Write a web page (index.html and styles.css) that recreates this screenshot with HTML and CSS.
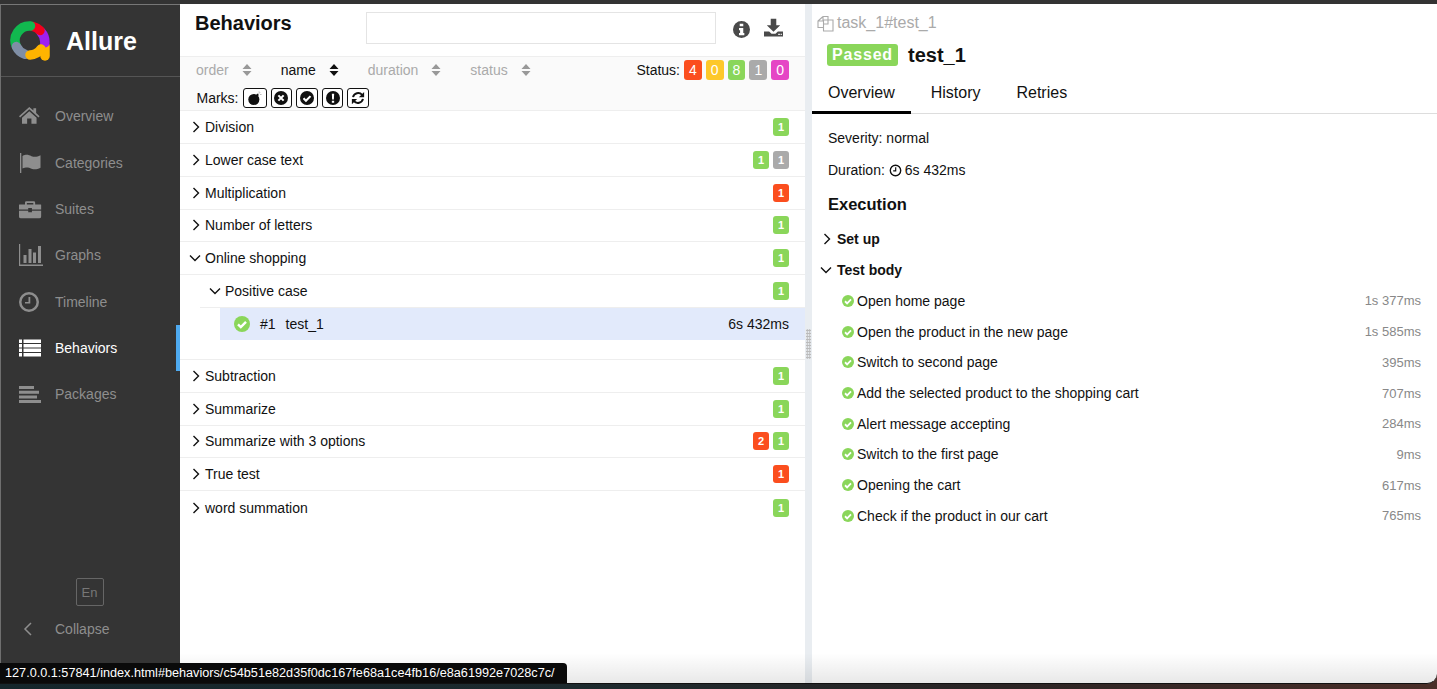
FILE: index.html
```html
<!DOCTYPE html>
<html lang="en">
<head>
    <meta charset="UTF-8">
    <meta name="viewport" content="width=device-width, initial-scale=1.0">
    <title>Allure Report</title>
    <link rel="stylesheet" href="styles.css">
</head>
<body>
<svg class="sprite" aria-hidden="true">
    <symbol id="i-check" viewBox="0 0 24 24">
        <circle cx="12" cy="12" r="12" fill="currentColor"/>
        <path d="M6 12.500l4.200 4.200L18 8.800" fill="none" stroke="#fff" stroke-width="3.600"/>
    </symbol>
    <symbol id="i-times" viewBox="0 0 24 24">
        <circle cx="12" cy="12" r="12" fill="currentColor"/>
        <path d="M7.500 7.500l9 9M16.500 7.500l-9 9" fill="none" stroke="#fff" stroke-width="3.600"/>
    </symbol>
    <symbol id="i-excl" viewBox="0 0 24 24">
        <circle cx="12" cy="12" r="12" fill="currentColor"/>
        <path d="M10 4.500h4l-.5 10h-3zM10 16.500h4v3.500h-4z" fill="#fff"/>
    </symbol>
    <symbol id="i-bomb" viewBox="0 0 24 24">
        <circle cx="10" cy="14.500" r="9.500" fill="currentColor"/>
        <path d="M15 8l2.500-2.500" stroke="currentColor" stroke-width="3.500"/>
        <path d="M18.500 4.500l2-2M21 6h2M19 1v1.500" stroke="#666" stroke-width="1"/>
    </symbol>
    <symbol id="i-refresh" viewBox="0 0 24 24">
        <path d="M3.500 10.500A9 9 0 0 1 19 6.500" fill="none" stroke="currentColor" stroke-width="3.400"/>
        <path d="M22.500 1.500v9h-9z" fill="currentColor"/>
        <path d="M20.500 13.500A9 9 0 0 1 5 17.500" fill="none" stroke="currentColor" stroke-width="3.400"/>
        <path d="M1.500 22.500v-9h9z" fill="currentColor"/>
    </symbol>
    <symbol id="i-caret" viewBox="0 0 10 14">
        <path d="M5 1l4.500 5h-9zM5 13l4.500-5h-9z" fill="currentColor"/>
    </symbol>
    <symbol id="i-right" viewBox="0 0 10 12">
        <path d="M2.500 1l5 5-5 5" fill="none" stroke="currentColor" stroke-width="1.400"/>
    </symbol>
    <symbol id="i-down" viewBox="0 0 12 10">
        <path d="M1 2.500l5 5 5-5" fill="none" stroke="currentColor" stroke-width="1.400"/>
    </symbol>
</svg>

<div class="window">
    <aside class="side-nav">
        <div class="side-nav__brand">
            <svg class="side-nav__logo" viewBox="0 0 40 40" aria-hidden="true" fill="none" stroke-width="9.500" stroke-linecap="round">
                <path d="M35 25V35" stroke="#ffb400"/>
                <path d="M31 11A14.500 14.500 0 0 1 34.800 22" stroke="#a020f0"/>
                <path d="M30 9.500A14.500 14.500 0 0 0 23 5.500" stroke="#f0001c"/>
                <path d="M20.500 5A14.500 14.500 0 0 0 6.400 25.600" stroke="#11b84f"/>
                <path d="M6.400 25.600A14.500 14.500 0 0 0 15 33.300" stroke="#7f8ea5"/>
                <path d="M20 34A14.500 14.500 0 0 0 31 28" stroke="#ffb400"/>
            </svg>
            <span class="side-nav__name">Allure</span>
        </div>
        <ul class="side-nav__menu">
            <li class="side-nav__item">
                <svg class="side-nav__icon" viewBox="0 -1 28 28" aria-hidden="true"><path d="M12 2.500L0 13.200l1.300 1.500L12 5.200l10.700 9.500 1.300-1.500-4-3.600V4h-3.200v2.700zM12 7.500L3.500 15v7h6v-6h5v6h6v-7z"/></svg>
                Overview
            </li>
            <li class="side-nav__item">
                <svg class="side-nav__icon" viewBox="0 0 24 24" aria-hidden="true"><path d="M1 2h1.300v20H1zM3.500 5c4-2 6-1 9 .2 3 1 5.500.8 9-1v12.500c-3.500 1.800-6 2-9 1-3-1.200-5-2-9-.2z"/></svg>
                Categories
            </li>
            <li class="side-nav__item">
                <svg class="side-nav__icon" viewBox="0 0 26 24" aria-hidden="true"><path d="M8 3.500h8a1.500 1.500 0 0 1 1.500 1.500v2h6a.5.5 0 0 1 .5.500v5H14v-1.500h-4V12.500H0v-5A.5.5 0 0 1 .5 7h6V5A1.500 1.500 0 0 1 8 3.500zM8.500 5.500V7h7V5.500zM0 14h10v1.500h4V14h10v6a2 2 0 0 1-2 2H2a2 2 0 0 1-2-2z"/></svg>
                Suites
            </li>
            <li class="side-nav__item">
                <svg class="side-nav__icon" viewBox="0 0 24 24" aria-hidden="true"><path d="M0 1h1.200v20.500H24V23H0zM4.500 12h3v8h-3zM9.500 6h3v14h-3zM14 9.500h3V20h-3zM19 3h3v17h-3z"/></svg>
                Graphs
            </li>
            <li class="side-nav__item">
                <svg class="side-nav__icon" viewBox="0 -2 24 24" aria-hidden="true"><path d="M10 0a10 10 0 1 1 0 20 10 10 0 0 1 0-20zm0 2.500a7.500 7.500 0 1 0 0 15 7.500 7.500 0 0 0 0-15zM9.500 5h1.800v6.500H6V10h3.500z"/></svg>
                Timeline
            </li>
            <li class="side-nav__item side-nav__item--active">
                <svg class="side-nav__icon" viewBox="0 0 24 24" aria-hidden="true"><path d="M0 3.500h3v3.600H0zM4.500 3.500H22v3.600H4.500zM0 8h3v3.600H0zM4.500 8H22v3.600H4.500zM0 12.500h3v3.600H0zM4.500 12.500H22v3.600H4.500zM0 17h3v3.600H0zM4.500 17H22v3.600H4.500z"/></svg>
                Behaviors
            </li>
            <li class="side-nav__item">
                <svg class="side-nav__icon" viewBox="0 0 24 24" aria-hidden="true"><path d="M0 4h15v3H0zM0 8.700h20v3H0zM0 13.400h18v3H0zM0 18h22v3H0z"/></svg>
                Packages
            </li>
        </ul>
        <div class="side-nav__foot">
            <div class="side-nav__lang">En</div>
            <div class="side-nav__collapse">
                <svg class="side-nav__back" viewBox="0 0 10 14" aria-hidden="true"><path d="M8 1L2 7l6 6" fill="none" stroke="currentColor" stroke-width="1.500"/></svg>
                Collapse
            </div>
        </div>
    </aside>

    <main class="tree-pane">
        <div class="tree-pane__head">
            <h2 class="tree-pane__title">Behaviors</h2>
            <input class="tree-pane__search" type="text" aria-label="Search">
            <svg class="tree-pane__info" viewBox="0 0 24 24" aria-hidden="true"><circle cx="12" cy="12" r="12" fill="#4a4a4a"/><path d="M9.500 4h5v3.500h-5zM8.500 10h6v7h1.500v3H8.500v-3H10v-4H8.500z" fill="#fff"/></svg>
            <svg class="tree-pane__download" viewBox="0 0 24 24" aria-hidden="true"><path d="M8.500 1h7v8h5L12 17.500 3.500 9h5zM0 17h6.500l3 3h5l3-3H24v6.500H0z" fill="#4a4a4a"/><path d="M18 20h2v1.500h-2zM21 20h1.500v1.500H21z" fill="#fff"/></svg>
        </div>
        <div class="filters">
            <div class="filters__row">
                <span class="sorter">order <svg class="sorter__caret"><use href="#i-caret"/></svg></span>
                <span class="sorter sorter--active">name <svg class="sorter__caret"><use href="#i-caret"/></svg></span>
                <span class="sorter">duration <svg class="sorter__caret"><use href="#i-caret"/></svg></span>
                <span class="sorter">status <svg class="sorter__caret"><use href="#i-caret"/></svg></span>
                <span class="filters__status">
                    Status:
                    <span class="count count--failed">4</span>
                    <span class="count count--broken">0</span>
                    <span class="count count--passed">8</span>
                    <span class="count count--skipped">1</span>
                    <span class="count count--unknown">0</span>
                </span>
            </div>
            <div class="filters__marks">
                Marks:
                <span class="mark mark--wide"><svg class="mark__icon"><use href="#i-bomb"/></svg></span>
                <span class="mark"><svg class="mark__icon"><use href="#i-times"/></svg></span>
                <span class="mark"><svg class="mark__icon"><use href="#i-check"/></svg></span>
                <span class="mark"><svg class="mark__icon"><use href="#i-excl"/></svg></span>
                <span class="mark"><svg class="mark__icon"><use href="#i-refresh"/></svg></span>
            </div>
        </div>

        <div class="tree">
            <div class="node">
                <svg class="node__arrow"><use href="#i-right"/></svg><span class="node__name">Division</span>
                <span class="pill pill--passed">1</span>
            </div>
            <div class="node">
                <svg class="node__arrow"><use href="#i-right"/></svg><span class="node__name">Lower case text</span>
                <span class="pill pill--passed">1</span><span class="pill pill--skipped">1</span>
            </div>
            <div class="node">
                <svg class="node__arrow"><use href="#i-right"/></svg><span class="node__name">Multiplication</span>
                <span class="pill pill--failed">1</span>
            </div>
            <div class="node">
                <svg class="node__arrow"><use href="#i-right"/></svg><span class="node__name">Number of letters</span>
                <span class="pill pill--passed">1</span>
            </div>
            <div class="node node--open">
                <svg class="node__arrow node__arrow--open"><use href="#i-down"/></svg><span class="node__name">Online shopping</span>
                <span class="pill pill--passed">1</span>
            </div>
            <div class="tree__group">
                <div class="node node--open node--sub">
                    <svg class="node__arrow node__arrow--open"><use href="#i-down"/></svg><span class="node__name">Positive case</span>
                    <span class="pill pill--passed">1</span>
                </div>
                <div class="leaf">
                    <svg class="leaf__status"><use href="#i-check"/></svg>
                    <span class="leaf__order">#1</span>
                    <span class="leaf__name">test_1</span>
                    <span class="leaf__time">6s 432ms</span>
                </div>
            </div>
            <div class="node">
                <svg class="node__arrow"><use href="#i-right"/></svg><span class="node__name">Subtraction</span>
                <span class="pill pill--passed">1</span>
            </div>
            <div class="node">
                <svg class="node__arrow"><use href="#i-right"/></svg><span class="node__name">Summarize</span>
                <span class="pill pill--passed">1</span>
            </div>
            <div class="node">
                <svg class="node__arrow"><use href="#i-right"/></svg><span class="node__name">Summarize with 3 options</span>
                <span class="pill pill--failed">2</span><span class="pill pill--passed">1</span>
            </div>
            <div class="node">
                <svg class="node__arrow"><use href="#i-right"/></svg><span class="node__name">True test</span>
                <span class="pill pill--failed">1</span>
            </div>
            <div class="node">
                <svg class="node__arrow"><use href="#i-right"/></svg><span class="node__name">word summation</span>
                <span class="pill pill--passed">1</span>
            </div>
        </div>
    </main>

    <div class="splitter"><span class="splitter__grip"></span></div>

    <section class="detail">
        <div class="detail__path">
            <svg class="detail__copy" viewBox="0 0 17 17" aria-hidden="true"><path d="M6 1.500L1 6v6.500h5M6 1.500h5V5M6 1.500V6H1M6.500 5h9.500v11H6.500zM11 5v4H6.500" fill="none" stroke="#aaa" stroke-width="1.100"/></svg>
            task_1#test_1
        </div>
        <div class="detail__title">
            <span class="detail__badge">Passed</span>
            <h2 class="detail__name">test_1</h2>
        </div>
        <div class="tabs">
            <span class="tabs__tab tabs__tab--active">Overview</span>
            <span class="tabs__tab">History</span>
            <span class="tabs__tab">Retries</span>
        </div>
        <div class="detail__body">
            <p class="detail__line">Severity: normal</p>
            <p class="detail__line">
                Duration:
                <svg class="detail__clock" viewBox="0 0 14 14" aria-hidden="true"><circle cx="7" cy="7" r="5.600" fill="none" stroke="#111" stroke-width="1.500"/><path d="M7.200 3.500v4H4.500" fill="none" stroke="#111" stroke-width="1.300"/></svg>
                6s 432ms
            </p>
            <h3 class="detail__section">Execution</h3>
            <div class="stage stage--closed"><svg class="stage__arrow"><use href="#i-right"/></svg>Set up</div>
            <div class="stage"><svg class="stage__arrow stage__arrow--open"><use href="#i-down"/></svg>Test body</div>
            <ul class="steps">
                <li class="step"><svg class="step__icon"><use href="#i-check"/></svg><span class="step__name">Open home page</span><span class="step__time">1s 377ms</span></li>
                <li class="step"><svg class="step__icon"><use href="#i-check"/></svg><span class="step__name">Open the product in the new page</span><span class="step__time">1s 585ms</span></li>
                <li class="step"><svg class="step__icon"><use href="#i-check"/></svg><span class="step__name">Switch to second page</span><span class="step__time">395ms</span></li>
                <li class="step"><svg class="step__icon"><use href="#i-check"/></svg><span class="step__name">Add the selected product to the shopping cart</span><span class="step__time">707ms</span></li>
                <li class="step"><svg class="step__icon"><use href="#i-check"/></svg><span class="step__name">Alert message accepting</span><span class="step__time">284ms</span></li>
                <li class="step"><svg class="step__icon"><use href="#i-check"/></svg><span class="step__name">Switch to the first page</span><span class="step__time">9ms</span></li>
                <li class="step"><svg class="step__icon"><use href="#i-check"/></svg><span class="step__name">Opening the cart</span><span class="step__time">617ms</span></li>
                <li class="step"><svg class="step__icon"><use href="#i-check"/></svg><span class="step__name">Check if the product in our cart</span><span class="step__time">765ms</span></li>
            </ul>
        </div>
    </section>

    <div class="window__shade"></div>
    <div class="link-tip">127.0.0.1:57841/index.html#behaviors/c54b51e82d35f0dc167fe68a1ce4fb16/e8a61992e7028c7c/</div>
</div>
</body>
</html>
```
FILE: styles.css
```css
* {
    box-sizing: border-box;
}

html, body {
    height: 100%;
}

body {
    margin: 0;
    overflow: hidden;
    font-family: "Liberation Sans", Arial, sans-serif;
    font-size: 14px;
    color: #111;
    background: linear-gradient(90deg, #15262b 0%, #1d2a2e 40%, #2b2424 70%, #4a2e28 100%);
}

.sprite {
    display: none;
}

.window {
    position: relative;
    display: flex;
    height: 684px;
    overflow: hidden;
    background-color: #fff;
    border-top: 4px solid #333;
    border-bottom: 1px solid #111;
    border-radius: 0 0 10px 0;
}

/* left menu */
.side-nav {
    display: flex;
    flex-direction: column;
    flex: 0 0 180px;
    background-color: #343434;
    border-top: 1px solid #777;
    border-left: 1px solid #6f6f6f;
    color: #8e8e8e;
}

.side-nav__brand {
    display: flex;
    align-items: center;
    height: 72px;
    padding: 1px 0 0 9px;
    border-bottom: 1px solid #555;
}

.side-nav__logo {
    width: 40px;
    height: 40px;
}

.side-nav__name {
    margin-left: 16px;
    font-size: 25px;
    font-weight: bold;
    color: #fff;
}

.side-nav__menu {
    list-style: none;
    margin: 16.300px 0 0;
    padding: 0;
}

.side-nav__item {
    display: flex;
    align-items: center;
    height: 46.300px;
    padding-left: 18px;
}

.side-nav__item--active {
    color: #fff;
    box-shadow: inset -4px 0 0 #4eaaf0;
}

.side-nav__icon {
    width: 24px;
    height: 24px;
    margin-right: 12px;
    fill: currentColor;
}

.side-nav__foot {
    display: flex;
    flex-direction: column;
    align-items: center;
    margin-top: auto;
    padding-bottom: 45px;
}

.side-nav__lang {
    display: flex;
    align-items: center;
    justify-content: center;
    width: 28px;
    height: 28px;
    margin-right: 2px;
    font-size: 13px;
    color: #777;
    border: 1px solid #666;
    border-radius: 2px;
}

.side-nav__collapse {
    display: flex;
    align-items: center;
    align-self: stretch;
    height: 18px;
    margin-top: 14px;
    padding-left: 22px;
}

.side-nav__back {
    width: 10px;
    height: 14px;
    margin-right: 22px;
}

/* tree column */
.tree-pane {
    flex: 0 0 625px;
    display: flex;
    flex-direction: column;
}

.tree-pane__head {
    display: flex;
    align-items: flex-start;
    height: 52px;
    padding: 0 15px;
}

.tree-pane__title {
    width: 171px;
    margin: 8px 0 0;
    font-size: 20px;
    line-height: 23px;
}

.tree-pane__search {
    width: 350px;
    height: 32px;
    margin-top: 8px;
    border: 1px solid #e4e4e4;
    background-color: #fff;
}

.tree-pane__info {
    width: 17px;
    height: 17px;
    margin: 17px 0 0 17px;
}

.tree-pane__download {
    width: 19px;
    height: 19px;
    margin: 14px 0 0 14px;
}

.filters {
    height: 55.200px;
    padding: 3px 16px 0;
    background-color: #fafafa;
    border-top: 1px solid #eee;
    border-bottom: 1px solid #eee;
}

.filters__row {
    display: flex;
    align-items: center;
    height: 20px;
    color: #aaa;
}

.sorter {
    display: flex;
    align-items: center;
    margin-right: 29px;
}

.sorter--active {
    color: #111;
}

.sorter__caret {
    width: 10px;
    height: 14px;
    margin-left: 13px;
    color: #999;
}

.sorter--active .sorter__caret {
    color: #111;
}

.filters__status {
    display: flex;
    align-items: center;
    gap: 4px;
    margin-left: auto;
    color: #111;
}

.count {
    width: 17.800px;
    height: 20px;
    line-height: 20px;
    text-align: center;
    color: #fff;
    border-radius: 3px;
}

.count--failed {
    background-color: #fb4e1e;
}

.count--broken {
    background-color: #fdc82a;
}

.count--passed {
    background-color: #8ad65a;
}

.count--skipped {
    background-color: #aaa;
}

.count--unknown {
    background-color: #e545c5;
}

.filters__marks {
    display: flex;
    align-items: center;
    gap: 4.100px;
    height: 21px;
    margin-top: 7px;
    padding-left: 0.500px;
}

.mark {
    display: flex;
    align-items: center;
    justify-content: center;
    width: 21.500px;
    height: 20px;
    background-color: #fff;
    border: 1px solid #111;
    border-radius: 3px;
}

.mark--wide {
    width: 24px;
}

.mark__icon {
    width: 14px;
    height: 14px;
}

.tree {
    flex: 1;
}

.node {
    display: flex;
    align-items: center;
    height: 32.800px;
    padding-right: 16px;
    border-bottom: 1px solid #eee;
}

.node:last-child {
    border-bottom: none;
}

.node__arrow {
    width: 10px;
    height: 12px;
    margin: 0 4px 0 11px;
}

.node__arrow--open {
    width: 12px;
    height: 10px;
    margin: 0 4px 0 9px;
}

.node__name {
    flex: 1;
}

.node--sub {
    margin-left: 20px;
}

.pill {
    width: 16px;
    height: 18px;
    margin-left: 4px;
    font-size: 11px;
    font-weight: bold;
    line-height: 18px;
    text-align: center;
    color: #fff;
    border-radius: 3px;
}

.pill--passed {
    background-color: #8ad65a;
}

.pill--failed {
    background-color: #fb4e1e;
}

.pill--skipped {
    background-color: #aaa;
}

.tree__group {
    padding-bottom: 19px;
    border-bottom: 1px solid #eee;
}

.leaf {
    display: flex;
    align-items: center;
    height: 32px;
    margin-left: 40px;
    padding: 0 16px 0 14px;
    background-color: #e2eafb;
}

.leaf__status {
    width: 16px;
    height: 16px;
    color: #8ad65a;
}

.leaf__order {
    margin-left: 10px;
}

.leaf__name {
    flex: 1;
    margin-left: 10px;
}

/* drag handle */
.splitter {
    flex: 0 0 7px;
    display: flex;
    align-items: center;
    justify-content: center;
    background-color: #e9edf1;
}

.splitter__grip {
    width: 5px;
    height: 30px;
    background-image: radial-gradient(#bbb 1px, transparent 1.200px);
    background-size: 2.500px 3px;
}

/* right column */
.detail {
    flex: 1;
    min-width: 0;
}

.detail__path {
    display: flex;
    align-items: center;
    height: 20px;
    margin: 9px 0 0 5px;
    font-size: 16px;
    color: #aaa;
}

.detail__copy {
    width: 17px;
    height: 17px;
    margin-right: 3px;
}

.detail__title {
    display: flex;
    align-items: center;
    margin: 11px 0 0 15px;
}

.detail__badge {
    width: 71px;
    height: 22px;
    font-size: 16px;
    font-weight: bold;
    line-height: 22px;
    letter-spacing: 0.800px;
    text-align: center;
    color: #fff;
    background-color: #8ad65a;
    border-radius: 3px;
}

.detail__name {
    margin: 0 0 0 10px;
    font-size: 20px;
    line-height: 22px;
}

.tabs {
    display: flex;
    height: 38px;
    margin-top: 10px;
    font-size: 16px;
    border-bottom: 1px solid #ddd;
}

.tabs__tab {
    height: 38px;
    padding: 8px 18px;
}

.tabs__tab--active {
    padding: 8px 16px 0;
    border-bottom: 3px solid #000;
}

.tabs__tab--active + .tabs__tab {
    padding-left: 20px;
}

.detail__body {
    padding: 16px 16px 0;
}

.detail__line {
    display: flex;
    align-items: center;
    gap: 4px;
    height: 16px;
    margin: 0 0 16px;
}

.detail__clock {
    width: 13px;
    height: 13px;
    margin-right: -1px;
}

.detail__section {
    margin: 16px 0 0;
    font-size: 16.500px;
    line-height: 20px;
}

.stage {
    display: flex;
    align-items: center;
    height: 30.800px;
    margin-left: -6px;
    font-weight: bold;
}

.stage--closed {
    margin-top: 10px;
}

.stage__arrow {
    width: 10px;
    height: 12px;
    margin-right: 5px;
}

.stage__arrow--open {
    width: 12px;
    height: 10px;
    margin-left: -2px;
    margin-right: 5px;
}

.steps {
    list-style: none;
    margin: 0;
    padding: 0;
}

.step {
    display: flex;
    align-items: center;
    height: 30.700px;
    padding-left: 14px;
}

.step__icon {
    width: 12px;
    height: 12px;
    margin-right: 3px;
    color: #8ad65a;
}

.step__name {
    flex: 1;
}

.step__time {
    font-size: 13px;
    color: #888;
}

/* window shadow at the bottom edge, and the browser's link hint over it */
.window__shade {
    position: absolute;
    left: 180px;
    right: 0;
    bottom: 0;
    height: 30px;
    background: linear-gradient(rgba(0, 0, 0, 0), rgba(0, 0, 0, 0.09));
    pointer-events: none;
}

.link-tip {
    position: absolute;
    left: 0;
    bottom: 0;
    width: 567px;
    height: 20px;
    padding-left: 5px;
    font-size: 12.680px;
    line-height: 21px;
    white-space: nowrap;
    color: #fff;
    background-color: #0a0a0a;
    border-radius: 0 4px 0 0;
}
```
